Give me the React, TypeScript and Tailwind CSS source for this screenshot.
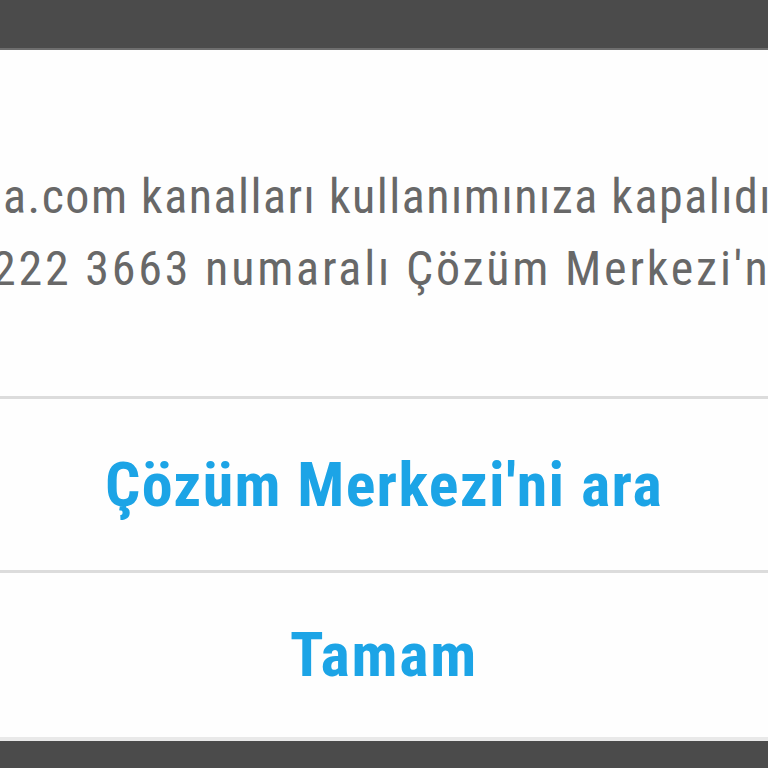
export default function App() {
  return (
    <div className="flex h-[768px] w-full flex-col overflow-hidden bg-[#4b4b4b] font-['Roboto',sans-serif] [font-stretch:75%]">
      <div className="h-[48px] shrink-0 bg-[#4b4b4b]" />
      <div className="h-[2px] shrink-0 bg-[#6e6e6e]" />

      <div className="flex flex-col bg-[#fefefe]">
        {/* message */}
        <div className="overflow-hidden pt-[111px] pb-[91px] text-[48px] leading-[72px] text-[#686868]">
          <div className="whitespace-nowrap pl-[3px] tracking-[1.5px]">a.com kanalları kullanımınıza kapalıdır.</div>
          <div className="-ml-[8px] whitespace-nowrap tracking-[2.8px]">222 3663 numaralı Çözüm Merkezi'ni arayabilirsiniz.</div>
        </div>

        <div className="h-[3px] bg-[#dcdcdc]" />
        <button className="flex h-[171px] items-center justify-center text-[62px] font-bold leading-[62px] tracking-[1.3px] text-[#1ca4e6]">
          Çözüm Merkezi'ni ara
        </button>
        <div className="h-[3px] bg-[#dcdcdc]" />
        <button className="flex h-[164px] items-center justify-center text-[62px] font-bold leading-[62px] tracking-[1.8px] text-[#1ca4e6] [font-stretch:80%]">
          Tamam
        </button>
        <div className="h-[4px] bg-[#e9e9e9]" />
      </div>

      <div className="flex-1 bg-[#4b4b4b]" />
    </div>
  );
}
